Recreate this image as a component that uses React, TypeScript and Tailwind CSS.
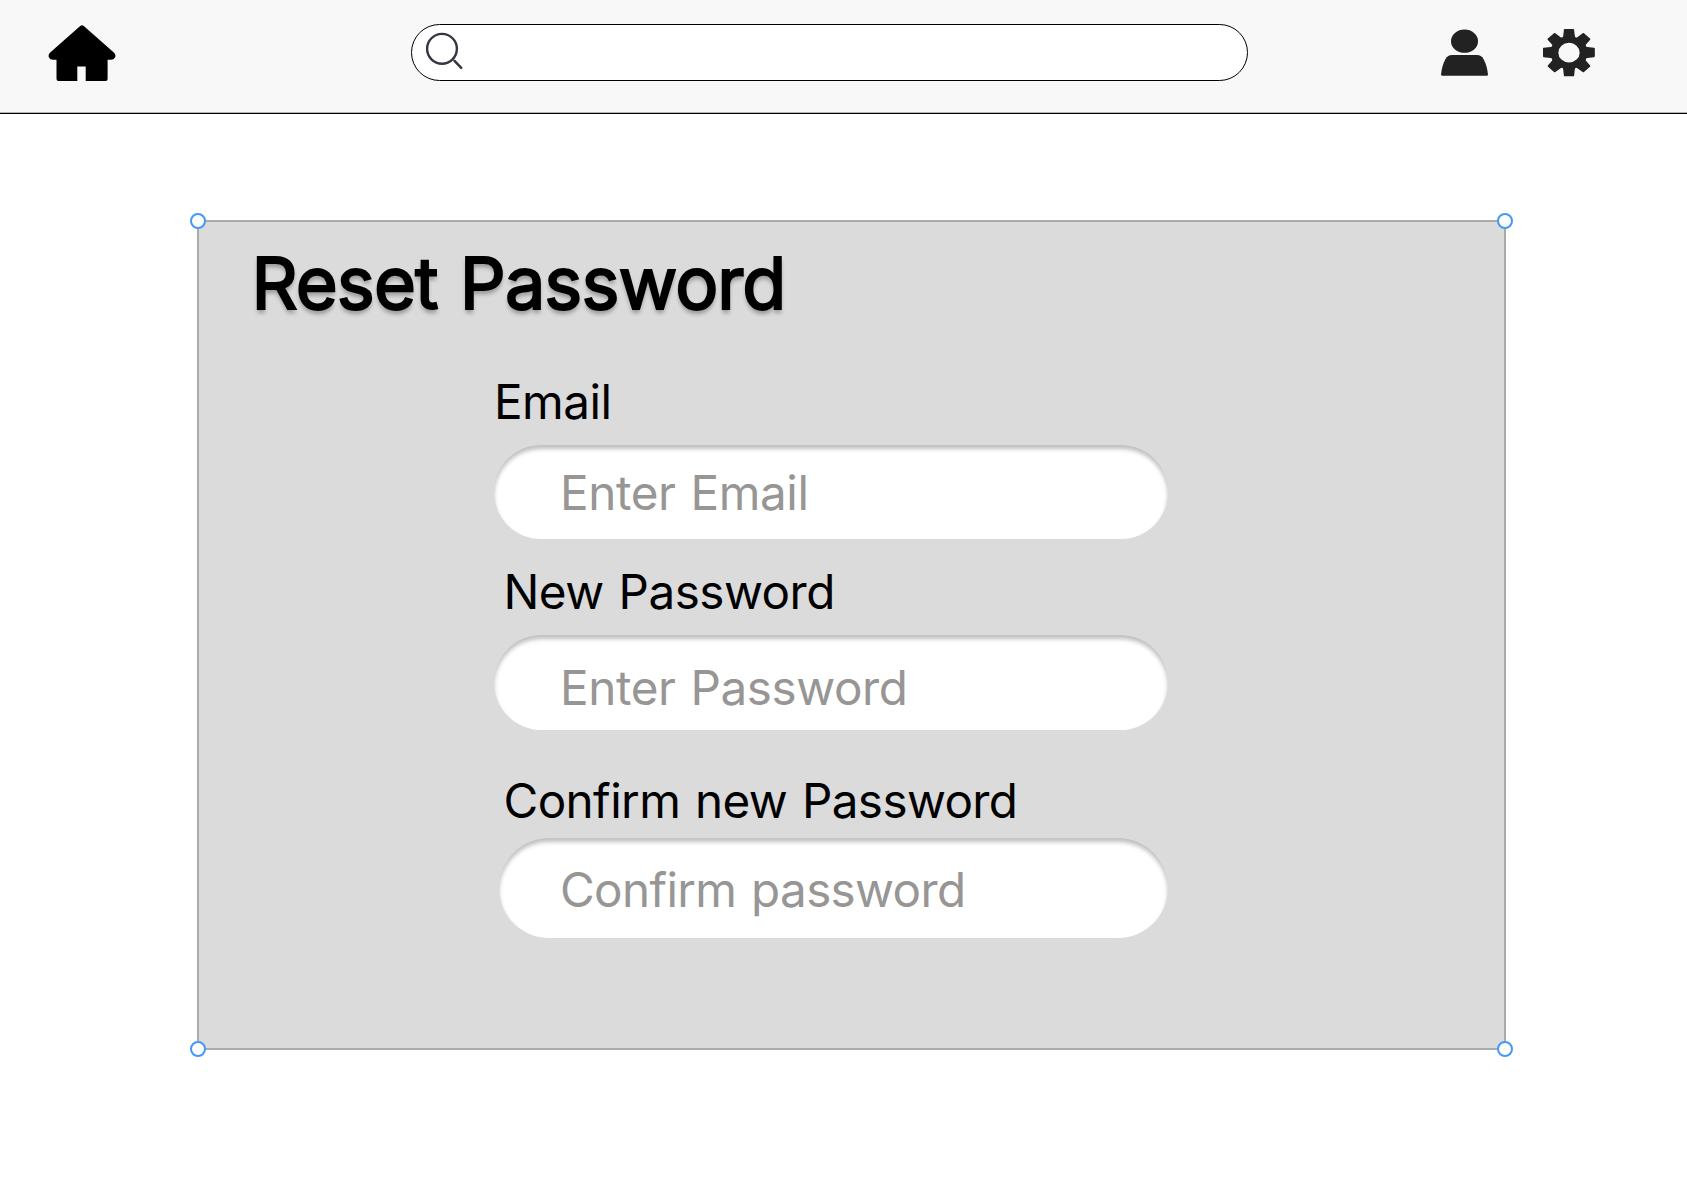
function HomeIcon() {
  return (
    <svg className="h-[58px] w-[68px]" viewBox="48 24 68 58" aria-label="Home">
      <path
        d="M80.2 26Q82 24.6 83.800 26L114.100 52.800Q116.200 55 115 57.500Q113.900 59.700 111 59.800H107.600V79Q107.600 81 105.600 81H85.700V66.500H77.300V81H58.500Q56.500 81 56.500 79V59.800H53Q50.100 59.700 49 57.500Q47.800 55 49.900 52.800Z"
        fill="#000"
      />
    </svg>
  );
}

function SearchIcon() {
  return (
    <svg className="h-[40px] w-[40px]" viewBox="424 30 40 40" fill="none" stroke="#363642" aria-label="Search">
      <circle cx="442" cy="48.8" r="14.9" strokeWidth="2.4" />
      <path d="M454.5 60.9L461.2 67.8" strokeWidth="2.5" strokeLinecap="round" />
    </svg>
  );
}

function UserIcon() {
  return (
    <svg className="h-[48px] w-[50px]" viewBox="1440 29 50 48" fill="#222" aria-label="Profile">
      <ellipse cx="1464.5" cy="41.2" rx="13.5" ry="11.6" />
      <path d="M1452 55H1477Q1481.2 55 1483.6 59.2Q1487.2 65.8 1488 74.6Q1488 75.7 1487 75.7H1442Q1441 75.7 1441 74.6Q1441.8 65.8 1445.4 59.2Q1447.8 55 1452 55Z" />
    </svg>
  );
}

function GearIcon() {
  return (
    <svg className="h-[50px] w-[54px]" viewBox="366 54 162 150" fill="#222" aria-label="Settings">
      <path
        fillRule="evenodd"
        d="M434 57H460Q462 57 462.3 59L464.5 79Q465 82 468 82.500Q470 83 472 81.500L488 69.800Q490 68.500 492 70L510 85.500Q512 87.300 510.500 89.300L498 103.500Q496.500 106 498 108.500Q499 110.800 502 111.200L522 113.500Q524.500 114 524.500 116V139Q524.500 141 522 141.500L502 144Q499 144.500 498 147Q496.500 149.500 498 152L510.500 166.500Q512 168.500 510 170.200L492 186Q490 187.500 488 186L472 174.500Q470 173 468 173.300Q465 174 464.500 177L462.300 197Q462 199 460 199H434Q432 199 431.700 197L429.500 177Q429 174 426 173.300Q424 173 422 174.500L406 186Q404 187.500 402 186L384 170.200Q382 168.500 383.500 166.500L396 152Q397.500 149.500 396 147Q395 144.500 392 144L371 141.500Q369 141 369 139V116Q369 114 371 113.500L392 111.200Q395 110.800 396 108.500Q397.500 106 396 103.500L383 89.300Q381.500 87.300 383.500 85.500L402 70Q404 68.500 406 69.800L422 81.500Q424 83 426 82.500Q429 82 429.500 79L431.700 59Q432 57 434 57ZM447 98.500A32 29.500 0 1 0 447 157.500A32 29.500 0 1 0 447 98.500Z"
      />
    </svg>
  );
}

function Handle({ place }: { place: string }) {
  return <span className={`absolute size-4 rounded-full border-2 border-[#4499f7] bg-white ${place}`} />;
}

function Field({ className, text }: { className: string; text: string }) {
  return (
    <div
      className={`rounded-full bg-white text-[#979695] shadow-[inset_0_4px_4px_rgba(0,0,0,0.25)] ${className}`}
    >
      {text}
    </div>
  );
}

export default function App() {
  return (
    <div className="h-[1204px] w-[1687px] overflow-hidden bg-white font-['Inter',sans-serif] text-black">
      <header className="flex h-[114px] items-start border-b border-black bg-[#f8f8f8] shadow-[inset_0_-1px_0_#b4b4b4]">
        <div className="ml-12 mt-6">
          <HomeIcon />
        </div>
        <div className="ml-[295px] mt-6 flex h-[57px] w-[837px] items-start rounded-full border border-black bg-white pl-3 pt-[5px]">
          <SearchIcon />
        </div>
        <div className="ml-48 mt-[29px]">
          <UserIcon />
        </div>
        <div className="ml-13 mt-[28px]">
          <GearIcon />
        </div>
      </header>

      <main className="relative ml-[197px] mt-[106px] h-[830px] w-[1309px] border-2 border-[#a9aba9] bg-[#dbdbdb] pt-[17px] text-[47.6px] leading-[58px] tracking-[-0.5px] [word-spacing:2px]">
        <h1 className="ml-[52.5px] h-[134px] text-[72px] leading-[87px] tracking-[-0.95px] [-webkit-text-stroke:2px_#000] [text-shadow:0_4px_4px_rgba(0,0,0,0.32)] [word-spacing:3px]">
          Reset Password
        </h1>
        <div className="ml-[295px] h-[72px]">Email</div>
        <Field className="ml-[295px] h-[94px] w-[674px] pl-[66px] pt-[19px] tracking-[-0.4px]" text="Enter Email" />
        <div className="ml-[304.5px] mt-[24px] h-[72px]">New Password</div>
        <Field className="ml-[295px] h-[95px] w-[674px] pl-[66px] pt-[24px] tracking-[-0.4px]" text="Enter Password" />
        <div className="ml-[304.5px] mt-[42px] h-[66px] tracking-[-0.6px]">Confirm new Password</div>
        <Field className="ml-[300px] h-[100px] w-[669px] pl-[61px] pt-[23px] tracking-[-0.65px]" text="Confirm password" />
        <Handle place="-left-[9px] -top-[9px]" />
        <Handle place="-right-[9px] -top-[9px]" />
        <Handle place="-bottom-[9px] -left-[9px]" />
        <Handle place="-bottom-[9px] -right-[9px]" />
      </main>
    </div>
  );
}
